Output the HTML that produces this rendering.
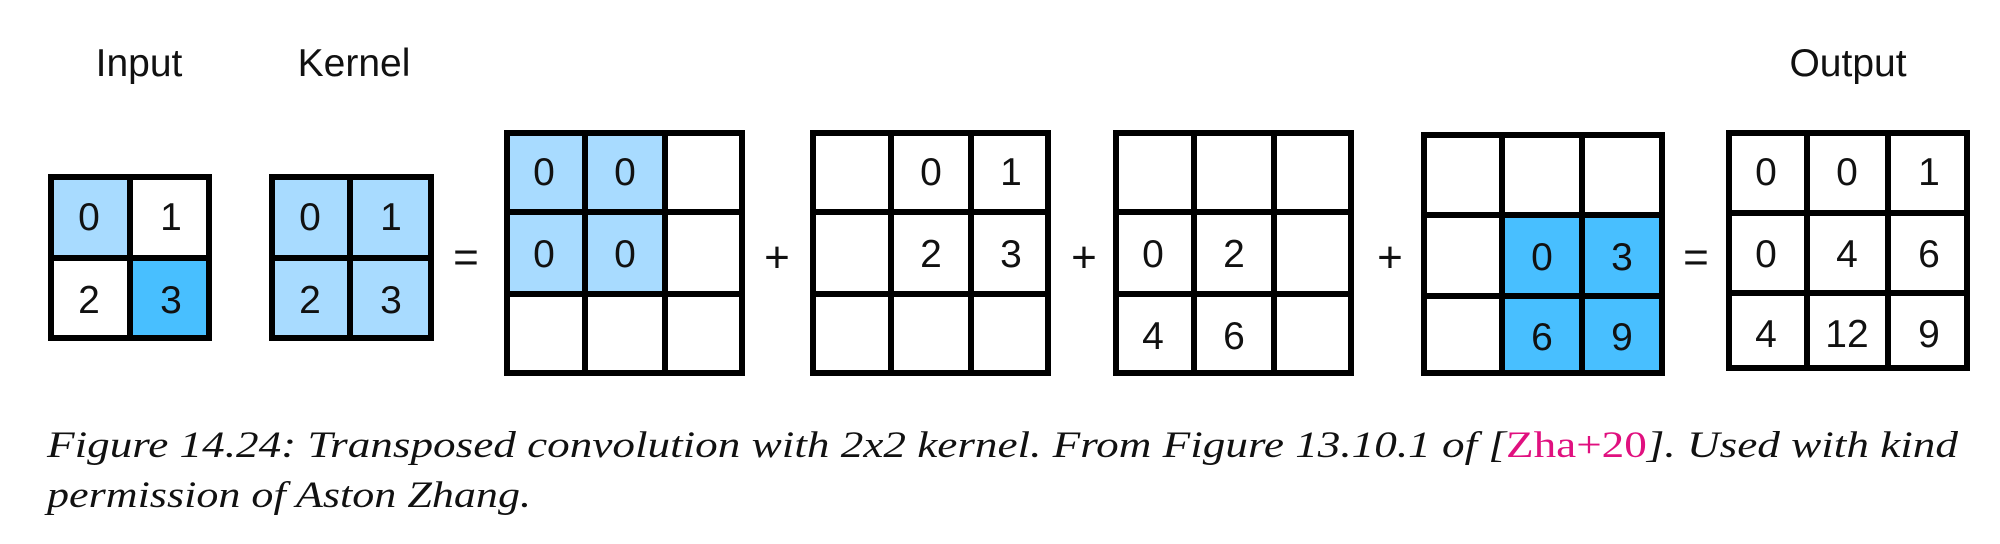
<!DOCTYPE html>
<html><head><meta charset="utf-8"><style>
html,body{margin:0;padding:0;background:#fff;width:2000px;height:544px;overflow:hidden}
svg{display:block}
.n{font-family:"Liberation Sans",sans-serif;font-size:39px;fill:#111;text-anchor:middle}
.l{font-family:"Liberation Sans",sans-serif;font-size:39px;fill:#111;text-anchor:middle}
.c{font-family:"Liberation Serif",serif;font-style:italic;font-size:37px;fill:#111}
.o{font-family:"Liberation Sans",sans-serif;font-size:44px;fill:#111;text-anchor:middle}
</style></head><body>
<svg width="2000" height="544" viewBox="0 0 2000 544" xmlns="http://www.w3.org/2000/svg">
<text class="l" x="139" y="76">Input</text>
<text class="l" x="354" y="76">Kernel</text>
<text class="l" x="1848" y="76">Output</text>

<rect x="48" y="174" width="82" height="84" fill="#a8dbff"/>
<rect x="130" y="258" width="82" height="83" fill="#48bfff"/>
<g fill="none" stroke="#000" stroke-width="6">
<rect x="51" y="177" width="158" height="161"/>
<line x1="130" y1="174" x2="130" y2="341"/><line x1="48" y1="258" x2="212" y2="258"/>
</g>
<text class="n" x="89" y="230">0</text><text class="n" x="171" y="230">1</text>
<text class="n" x="89" y="313">2</text><text class="n" x="171" y="313">3</text>

<rect x="269" y="174" width="165" height="167" fill="#a8dbff"/>
<g fill="none" stroke="#000" stroke-width="6">
<rect x="272" y="177" width="159" height="161"/>
<line x1="350" y1="174" x2="350" y2="341"/><line x1="269" y1="258" x2="434" y2="258"/>
</g>
<text class="n" x="310" y="230">0</text><text class="n" x="391" y="230">1</text>
<text class="n" x="310" y="313">2</text><text class="n" x="391" y="313">3</text>

<text class="o" x="466" y="272">=</text>

<rect x="504" y="130" width="161" height="164" fill="#a8dbff"/>
<g fill="none" stroke="#000" stroke-width="6">
<rect x="507" y="133" width="235" height="240"/>
<line x1="585" y1="130" x2="585" y2="376"/><line x1="665" y1="130" x2="665" y2="376"/>
<line x1="504" y1="212" x2="745" y2="212"/><line x1="504" y1="294" x2="745" y2="294"/>
</g>
<text class="n" x="544" y="185">0</text><text class="n" x="625" y="185">0</text>
<text class="n" x="544" y="267">0</text><text class="n" x="625" y="267">0</text>

<text class="o" x="777" y="272">+</text>

<g fill="none" stroke="#000" stroke-width="6">
<rect x="813" y="133" width="235" height="240"/>
<line x1="891" y1="130" x2="891" y2="376"/><line x1="971" y1="130" x2="971" y2="376"/>
<line x1="810" y1="212" x2="1051" y2="212"/><line x1="810" y1="294" x2="1051" y2="294"/>
</g>
<text class="n" x="931" y="185">0</text><text class="n" x="1011" y="185">1</text>
<text class="n" x="931" y="267">2</text><text class="n" x="1011" y="267">3</text>

<text class="o" x="1084" y="272">+</text>

<g fill="none" stroke="#000" stroke-width="6">
<rect x="1116" y="133" width="235" height="240"/>
<line x1="1194" y1="130" x2="1194" y2="376"/><line x1="1274" y1="130" x2="1274" y2="376"/>
<line x1="1113" y1="212" x2="1354" y2="212"/><line x1="1113" y1="294" x2="1354" y2="294"/>
</g>
<text class="n" x="1153" y="267">0</text><text class="n" x="1234" y="267">2</text>
<text class="n" x="1153" y="349">4</text><text class="n" x="1234" y="349">6</text>

<text class="o" x="1390" y="272">+</text>

<rect x="1502" y="214" width="161" height="162" fill="#48bfff"/>
<g fill="none" stroke="#000" stroke-width="6">
<rect x="1424" y="135" width="238" height="238"/>
<line x1="1502" y1="132" x2="1502" y2="376"/><line x1="1582" y1="132" x2="1582" y2="376"/>
<line x1="1421" y1="215" x2="1665" y2="215"/><line x1="1421" y1="296" x2="1665" y2="296"/>
</g>
<text class="n" x="1542" y="270">0</text><text class="n" x="1622" y="270">3</text>
<text class="n" x="1542" y="350">6</text><text class="n" x="1622" y="350">9</text>

<text class="o" x="1696" y="272">=</text>

<g fill="none" stroke="#000" stroke-width="6">
<rect x="1729" y="133" width="238" height="235"/>
<line x1="1807" y1="130" x2="1807" y2="371"/><line x1="1888" y1="130" x2="1888" y2="371"/>
<line x1="1726" y1="213" x2="1970" y2="213"/><line x1="1726" y1="293" x2="1970" y2="293"/>
</g>
<text class="n" x="1766" y="185">0</text><text class="n" x="1847" y="185">0</text><text class="n" x="1929" y="185">1</text>
<text class="n" x="1766" y="267">0</text><text class="n" x="1847" y="267">4</text><text class="n" x="1929" y="267">6</text>
<text class="n" x="1766" y="347">4</text><text class="n" x="1847" y="347">12</text><text class="n" x="1929" y="347">9</text>

<text class="c" x="47" y="457" textLength="1911" lengthAdjust="spacingAndGlyphs">Figure 14.24: Transposed convolution with 2x2 kernel. From Figure 13.10.1 of [<tspan fill="#e0107f" font-style="normal">Zha+20</tspan>]. Used with kind</text>
<text class="c" x="47" y="507" textLength="484" lengthAdjust="spacingAndGlyphs">permission of Aston Zhang.</text>
</svg>
</body></html>
